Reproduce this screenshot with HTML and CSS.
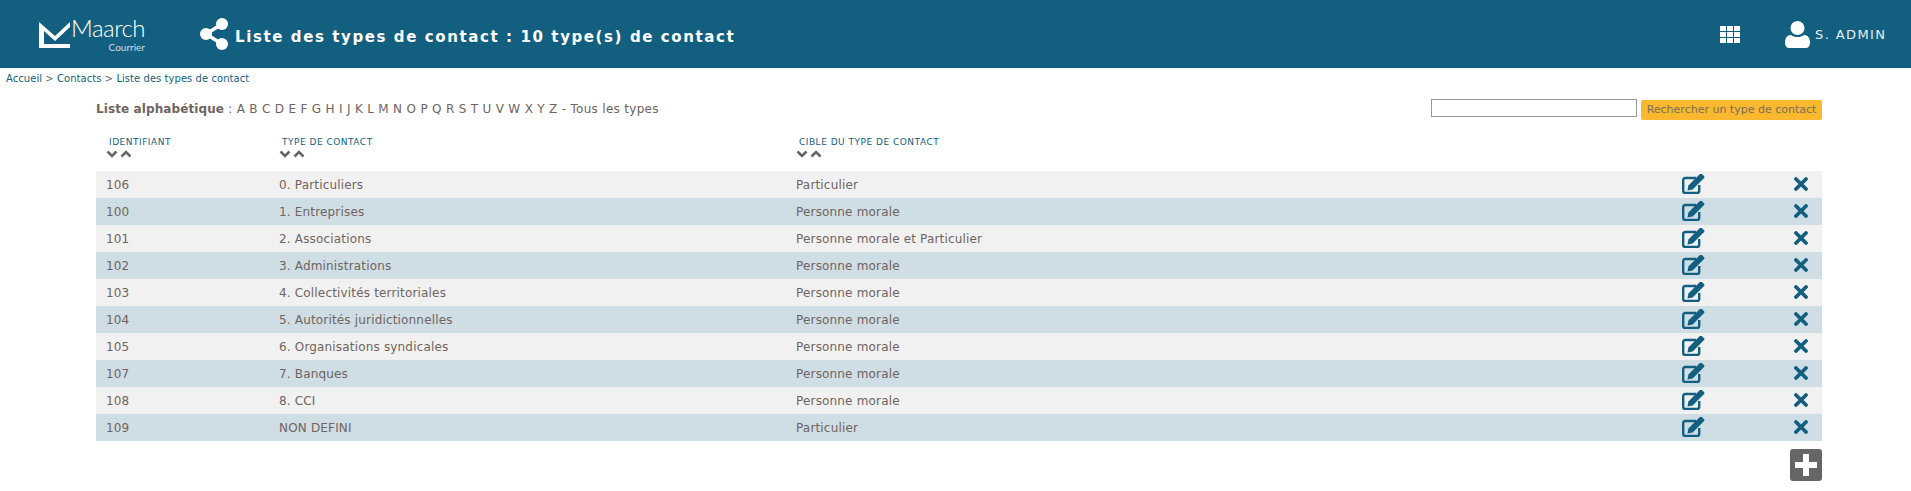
FILE: index.html
```html
<!doctype html>
<html lang="fr">
  <head>
    <meta charset="utf-8">
    <title>Liste des types de contact</title>
    <link rel="stylesheet" href="styles.css">
  </head>
  <body>
  <svg class="defs" width="0" height="0">
    <symbol id="i-edit" viewBox="0 0 23 20">
      <path d="M14 4H3.200A2 2 0 0 0 1.200 6V17a2 2 0 0 0 2 2h12a2 2 0 0 0 2-2V11" fill="none" stroke="currentColor" stroke-width="2.400"/>
      <path d="M5.500 16.500l.9-5.100L17.900 0q1 -.5 2 0l2.200 2.200q.5 1 0 1.900L10.600 15.600z" fill="currentColor"/>
    </symbol>
    <symbol id="i-del" viewBox="0 0 14 14">
      <path d="M2 2l10 10M12 2L2 12" stroke="currentColor" stroke-width="3.800" stroke-linecap="round" fill="none"/>
    </symbol>
    <symbol id="i-down" viewBox="0 0 12 8">
      <path d="M1.500 1.500L6 6l4.500-4.500" fill="none" stroke="currentColor" stroke-width="2.600"/>
    </symbol>
    <symbol id="i-up" viewBox="0 0 12 8">
      <path d="M1.500 6.500L6 2l4.500 4.500" fill="none" stroke="currentColor" stroke-width="2.600"/>
    </symbol>
  </svg>

  <header class="topbar">
    <div class="logo">
      <svg class="logo-mark" viewBox="0 0 31 26" width="31" height="26">
        <path fill="#fff" d="M0 0L16 14 31 0V5L16 19 5 9V22H31V26H0z"/>
      </svg>
      <div class="logo-text">
        <span class="logo-name">Maarch</span>
        <span class="logo-sub">Courrier</span>
      </div>
    </div>
    <svg class="share" viewBox="0 0 28 32" width="28" height="32">
      <path d="M6 16L22 6M6 16l16 10" stroke="#fff" stroke-width="3.500"/>
      <circle cx="6" cy="16" r="6" fill="#fff"/>
      <circle cx="22" cy="6" r="6" fill="#fff"/>
      <circle cx="22" cy="26" r="6" fill="#fff"/>
    </svg>
    <h1 class="title">Liste des types de contact : 10 type(s) de contact</h1>
    <svg class="apps" viewBox="0 0 20 17" width="20" height="17">
      <path fill="#fff" d="M0 0h6v5H0zM7 0h6v5H7zM14 0h6v5h-6zM0 6h6v5H0zM7 6h6v5H7zM14 6h6v5h-6zM0 12h6v5H0zM7 12h6v5H7zM14 12h6v5h-6z"/>
    </svg>
    <svg class="user" viewBox="0 0 25 27" width="25" height="27">
      <circle cx="12.500" cy="7" r="7" fill="#fff"/>
      <path fill="#fff" d="M0 22c0-5 2-8 6-8 2 1.500 4 2 6.500 2s4.500-.5 6.500-2c4 0 6 3 6 8 0 3-2 5-4 5H4c-2 0-4-2-4-5z"/>
    </svg>
    <span class="username">S. ADMIN</span>
  </header>

  <div class="crumbs"><a href="#">Accueil</a> &gt; <a href="#">Contacts</a> &gt; <a href="#">Liste des types de contact</a></div>

  <main class="content">
    <div class="toolbar">
      <div class="alpha">
        <b>Liste alphabétique</b> :
        <a href="#">A</a> <a href="#">B</a> <a href="#">C</a> <a href="#">D</a> <a href="#">E</a> <a href="#">F</a> <a href="#">G</a> <a href="#">H</a> <a href="#">I</a> <a href="#">J</a> <a href="#">K</a> <a href="#">L</a> <a href="#">M</a> <a href="#">N</a> <a href="#">O</a> <a href="#">P</a> <a href="#">Q</a> <a href="#">R</a> <a href="#">S</a> <a href="#">T</a> <a href="#">U</a> <a href="#">V</a> <a href="#">W</a> <a href="#">X</a> <a href="#">Y</a> <a href="#">Z</a> - <a href="#">Tous les types</a>
      </div>
      <form class="search">
        <input type="text" class="search-input">
        <button type="button" class="search-btn">Rechercher un type de contact</button>
      </form>
    </div>

    <table class="list">
      <colgroup>
        <col class="c-id"><col class="c-type"><col class="c-target"><col class="c-edit"><col class="c-del">
      </colgroup>
      <thead>
        <tr>
          <th><a href="#">IDENTIFIANT</a><div class="sort"><svg><use href="#i-down"/></svg><svg><use href="#i-up"/></svg></div></th>
          <th><a href="#">TYPE DE CONTACT</a><div class="sort"><svg><use href="#i-down"/></svg><svg><use href="#i-up"/></svg></div></th>
          <th><a href="#">CIBLE DU TYPE DE CONTACT</a><div class="sort"><svg><use href="#i-down"/></svg><svg><use href="#i-up"/></svg></div></th>
          <th></th>
          <th></th>
        </tr>
      </thead>
      <tbody>
        <tr><td>106</td><td>0. Particuliers</td><td>Particulier</td><td class="act"><svg class="edit"><use href="#i-edit"/></svg></td><td class="act"><svg class="del"><use href="#i-del"/></svg></td></tr>
        <tr><td>100</td><td>1. Entreprises</td><td>Personne morale</td><td class="act"><svg class="edit"><use href="#i-edit"/></svg></td><td class="act"><svg class="del"><use href="#i-del"/></svg></td></tr>
        <tr><td>101</td><td>2. Associations</td><td>Personne morale et Particulier</td><td class="act"><svg class="edit"><use href="#i-edit"/></svg></td><td class="act"><svg class="del"><use href="#i-del"/></svg></td></tr>
        <tr><td>102</td><td>3. Administrations</td><td>Personne morale</td><td class="act"><svg class="edit"><use href="#i-edit"/></svg></td><td class="act"><svg class="del"><use href="#i-del"/></svg></td></tr>
        <tr><td>103</td><td>4. Collectivités territoriales</td><td>Personne morale</td><td class="act"><svg class="edit"><use href="#i-edit"/></svg></td><td class="act"><svg class="del"><use href="#i-del"/></svg></td></tr>
        <tr><td>104</td><td>5. Autorités juridictionnelles</td><td>Personne morale</td><td class="act"><svg class="edit"><use href="#i-edit"/></svg></td><td class="act"><svg class="del"><use href="#i-del"/></svg></td></tr>
        <tr><td>105</td><td>6. Organisations syndicales</td><td>Personne morale</td><td class="act"><svg class="edit"><use href="#i-edit"/></svg></td><td class="act"><svg class="del"><use href="#i-del"/></svg></td></tr>
        <tr><td>107</td><td>7. Banques</td><td>Personne morale</td><td class="act"><svg class="edit"><use href="#i-edit"/></svg></td><td class="act"><svg class="del"><use href="#i-del"/></svg></td></tr>
        <tr><td>108</td><td>8. CCI</td><td>Personne morale</td><td class="act"><svg class="edit"><use href="#i-edit"/></svg></td><td class="act"><svg class="del"><use href="#i-del"/></svg></td></tr>
        <tr><td>109</td><td>NON DEFINI</td><td>Particulier</td><td class="act"><svg class="edit"><use href="#i-edit"/></svg></td><td class="act"><svg class="del"><use href="#i-del"/></svg></td></tr>
      </tbody>
    </table>

    <div class="add-row">
      <div class="add">
        <svg viewBox="0 0 22 22" width="22" height="22"><path fill="#fff" d="M8 0h6v8h8v6h-8v8H8v-8H0V8h8z"/></svg>
      </div>
    </div>
  </main>

  </body>
</html>
```

FILE: styles.css
```css
body {
  margin: 0;
  background-color: #fff;
  color: #666;
  font-family: "DejaVu Sans", Verdana, sans-serif;
  font-size: 12px;
}

a {
  color: inherit;
  text-decoration: none;
}

.defs {
  display: block;
  height: 0;
}

.topbar {
  display: flex;
  align-items: center;
  height: 68px;
  background-color: #135f7f;
  color: #fff;
}

.logo {
  display: flex;
  margin-left: 39px;
  width: 161px;
}

.logo-mark {
  margin-top: 6px;
  margin-right: 4px;
}

.logo-text {
  display: flex;
  flex-direction: column;
  align-items: flex-end;
  width: 71px;
  line-height: 1;
}

.logo-name {
  font-family: Lato, sans-serif;
  font-weight: 300;
  font-size: 24px;
  letter-spacing: -0.5px;
}

.logo-sub {
  font-family: Lato, sans-serif;
  font-size: 10px;
  margin-top: 2px;
  color: #cfdee6;
}

.share {
  margin-right: 7px;
}

.title {
  flex: 1;
  margin: 6px 0 0;
  font-size: 15px;
  font-weight: bold;
  letter-spacing: 1.6px;
}

.apps {
  margin-right: 45px;
}

.user {
  margin-right: 5px;
}

.username {
  width: 96px;
  margin-top: 1px;
  font-size: 13px;
  letter-spacing: 1.4px;
  color: #e6eef2;
}

.crumbs {
  padding: 5px 0 0 6px;
  font-size: 10px;
  line-height: 12px;
  letter-spacing: 0.05px;
  color: #666;
}

.crumbs a {
  color: #135f7f;
}

.content {
  padding: 0 89px 0 96px;
}

.toolbar {
  display: flex;
  justify-content: space-between;
  align-items: center;
  height: 20px;
  margin-top: 14px;
}

.alpha {
  font-size: 12px;
  letter-spacing: 0.3px;
  color: #6f6460;
}

.alpha b {
  letter-spacing: 0.1px;
}

.search {
  display: flex;
  align-items: flex-start;
  gap: 4px;
  margin: 0;
}

.search-input {
  width: 206px;
  height: 18px;
  padding: 0;
  box-sizing: border-box;
  border: 1px solid #999;
  background: #fff;
}

.search-btn {
  width: 181px;
  height: 20px;
  margin-top: 1px;
  padding: 0;
  border: none;
  border-radius: 2px;
  background-color: #f9b82d;
  color: #7a6e5c;
  font-family: inherit;
  font-size: 11px;
}

.list {
  width: 1726px;
  margin-top: 6px;
  table-layout: fixed;
  border-collapse: collapse;
}

.c-id { width: 173px; }
.c-type { width: 517px; }
.c-target { width: 820px; }
.c-edit { width: 174px; }
.c-del { width: 42px; }

.list th {
  height: 46px;
  padding: 0 0 0 10px;
  text-align: left;
  vertical-align: top;
  font-weight: normal;
  font-size: 9px;
  line-height: 11px;
}

.list th a {
  display: block;
  margin-top: 12px;
  padding-left: 3px;
  color: #135f7f;
  letter-spacing: 0.5px;
}

.sort {
  display: flex;
  gap: 2px;
  margin-top: 2px;
  color: #666;
}

.sort svg {
  width: 12px;
  height: 8px;
}

.list td {
  height: 27px;
  padding: 0 0 0 10px;
  font-size: 12px;
  letter-spacing: 0.17px;
  color: #6f6460;
}

.list tbody tr {
  background-color: #f1f1f1;
}

.list tbody tr:nth-child(even) {
  background-color: #cfdde4;
}

.list .act {
  padding: 0;
  color: #135f7f;
}

.act svg {
  display: block;
  margin: -1px auto 0;
}

.edit {
  width: 23px;
  height: 20px;
}

.del {
  width: 14px;
  height: 14px;
}

.add-row {
  display: flex;
  justify-content: flex-end;
  margin-top: 8px;
}

.add {
  display: flex;
  align-items: center;
  justify-content: center;
  width: 32px;
  height: 32px;
  border-radius: 3px;
  background-color: #666;
}
```
